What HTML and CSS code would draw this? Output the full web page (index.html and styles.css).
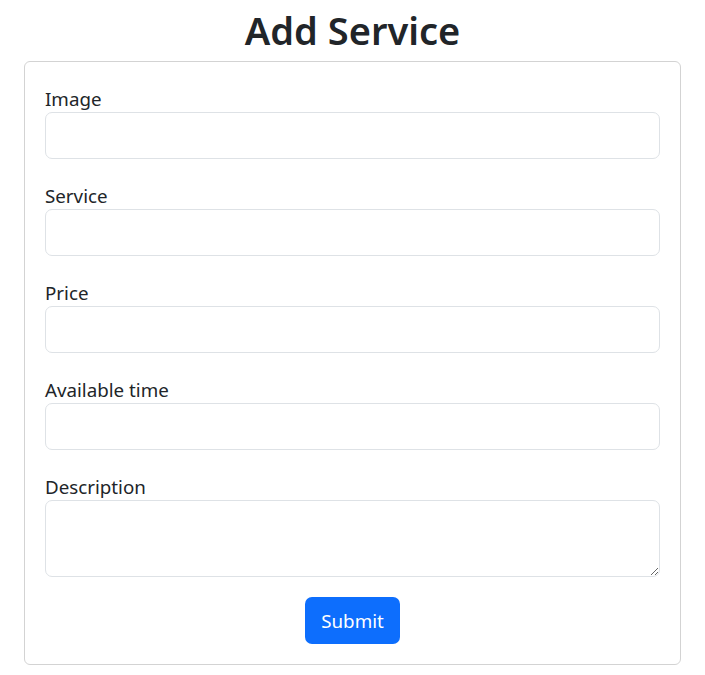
FILE: index.html
```html
<!DOCTYPE html>
<html lang="en">
<head>
<meta charset="utf-8">
<title>Add Service</title>
<link rel="stylesheet" href="styles.css">
</head>
<body>
<main class="page">
  <h1 class="title">Add Service</h1>
  <form class="card">
    <div class="field">
      <label class="label" for="image">Image</label>
      <input class="control" id="image" type="text">
    </div>
    <div class="field">
      <label class="label" for="service">Service</label>
      <input class="control" id="service" type="text">
    </div>
    <div class="field">
      <label class="label" for="price">Price</label>
      <input class="control" id="price" type="text">
    </div>
    <div class="field">
      <label class="label" for="time">Available time</label>
      <input class="control" id="time" type="text">
    </div>
    <div class="field">
      <label class="label" for="desc">Description</label>
      <textarea class="control textarea" id="desc"></textarea>
    </div>
    <div class="actions">
      <button class="btn" type="submit">Submit</button>
    </div>
  </form>
</main>
</body>
</html>
```
FILE: styles.css
```css
* { box-sizing: border-box; }
html, body { margin: 0; padding: 0; background: #fff; }
body {
  font-family: "Noto Sans", "Open Sans", sans-serif;
  color: #212529;
}
.page {
  padding: 0 24px;
  display: flex;
  flex-direction: column;
}
.title {
  margin: 6px 0 7px;
  text-align: center;
  font-size: 38px;
  font-weight: 600;
  line-height: 48px;
}
.card {
  border: 1px solid #d3d3d3;
  border-radius: 6px;
  padding: 23px 20px 20px;
  display: flex;
  flex-direction: column;
  gap: 23px;
  width: 657px;
}
.field { display: flex; flex-direction: column; }
.label {
  font-size: 18.75px;
  line-height: 27px;
}
.control {
  display: block;
  width: 100%;
  height: 47px;
  border: 1px solid #dee2e6;
  border-radius: 7px;
  font: inherit;
  font-size: 18.75px;
  padding: 8px 14px;
  background: #fff;
}
.textarea {
  height: 77px;
  resize: vertical;
}
.actions {
  display: flex;
  justify-content: center;
  margin-top: -3px;
}
.btn {
  background: #0d6efd;
  color: #fff;
  border: none;
  border-radius: 7px;
  font: inherit;
  font-size: 18.75px;
  width: 95px;
  height: 47px;
  padding: 0;
}
```
